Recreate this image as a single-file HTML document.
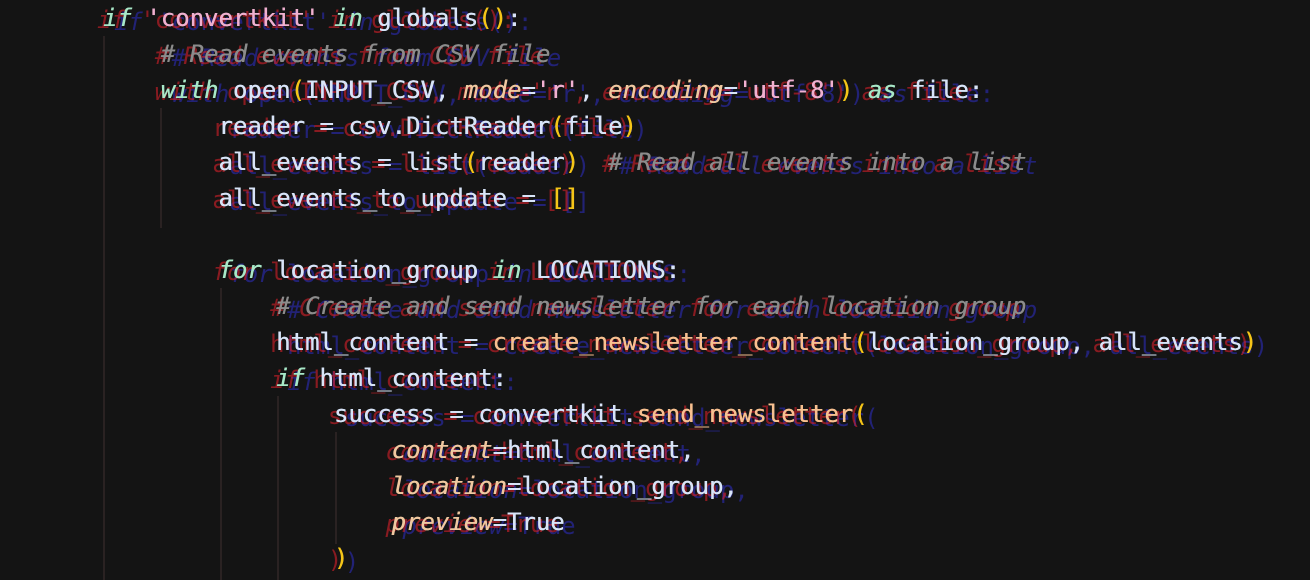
<!DOCTYPE html>
<html><head><style>
html,body{margin:0;padding:0;background:#141414;width:1310px;height:580px;overflow:hidden}
.l{position:absolute;left:0;top:0;width:1310px;height:580px}
pre{margin:0;font-family:"DejaVu Sans Mono","Liberation Mono",monospace;font-size:23.8px;line-height:36px;position:absolute;left:103px;top:0;color:#d8e4f8;white-space:pre;letter-spacing:0.1px}
.m pre{text-shadow:0.4px 0 0 currentColor}
.k{color:#a8e8c8;font-style:italic}
.s{color:#f0b0d0}
.c{color:#8c8c8c;font-style:italic}
.p{color:#f5c518}
.f{color:#f8c090}
.a{color:#f0c8a0;font-style:italic}
.r pre{left:97px;top:2px;opacity:.6}
.r pre,.r pre span{color:#d8202a!important}
.b pre{left:114px;top:4px;opacity:.5}
.b pre,.b pre span{color:#3030d8!important}
.g{position:absolute;width:2px;background:#2a2222}
</style></head><body>
<div class="g" style="left:103px;top:36px;height:544px"></div>
<div class="g" style="left:160px;top:108px;height:120px"></div>
<div class="g" style="left:220px;top:288px;height:292px"></div>
<div class="g" style="left:277px;top:396px;height:184px"></div>
<div class="g" style="left:335px;top:432px;height:112px"></div>
<div class="l b"><pre><span class="k">if</span> <span class="s">'convertkit'</span> <span class="k">in</span> globals<span class="p">()</span>:
    <span class="c"># Read events from CSV file</span>
    <span class="k">with</span> open<span class="p">(</span>INPUT_CSV, <span class="a">mode</span>=<span class="s">'r'</span>, <span class="a">encoding</span>=<span class="s">'utf-8'</span><span class="p">)</span> <span class="k">as</span> file:
        reader = csv.DictReader<span class="p">(</span>file<span class="p">)</span>
        all_events = list<span class="p">(</span>reader<span class="p">)</span>  <span class="c"># Read all events into a list</span>
        all_events_to_update = <span class="p">[]</span>

        <span class="k">for</span> location_group <span class="k">in</span> LOCATIONS:
            <span class="c"># Create and send newsletter for each location group</span>
            html_content = <span class="f">create_newsletter_content</span><span class="p">(</span>location_group, all_events<span class="p">)</span>
            <span class="k">if</span> html_content:
                success = convertkit.<span class="f">send_newsletter</span><span class="p">(</span>
                    <span class="a">content</span>=html_content,
                    <span class="a">location</span>=location_group,
                    <span class="a">preview</span>=True
                <span class="p">)</span></pre></div>
<div class="l r"><pre><span class="k">if</span> <span class="s">'convertkit'</span> <span class="k">in</span> globals<span class="p">()</span>:
    <span class="c"># Read events from CSV file</span>
    <span class="k">with</span> open<span class="p">(</span>INPUT_CSV, <span class="a">mode</span>=<span class="s">'r'</span>, <span class="a">encoding</span>=<span class="s">'utf-8'</span><span class="p">)</span> <span class="k">as</span> file:
        reader = csv.DictReader<span class="p">(</span>file<span class="p">)</span>
        all_events = list<span class="p">(</span>reader<span class="p">)</span>  <span class="c"># Read all events into a list</span>
        all_events_to_update = <span class="p">[]</span>

        <span class="k">for</span> location_group <span class="k">in</span> LOCATIONS:
            <span class="c"># Create and send newsletter for each location group</span>
            html_content = <span class="f">create_newsletter_content</span><span class="p">(</span>location_group, all_events<span class="p">)</span>
            <span class="k">if</span> html_content:
                success = convertkit.<span class="f">send_newsletter</span><span class="p">(</span>
                    <span class="a">content</span>=html_content,
                    <span class="a">location</span>=location_group,
                    <span class="a">preview</span>=True
                <span class="p">)</span></pre></div>
<div class="l m"><pre><span class="k">if</span> <span class="s">'convertkit'</span> <span class="k">in</span> globals<span class="p">()</span>:
    <span class="c"># Read events from CSV file</span>
    <span class="k">with</span> open<span class="p">(</span>INPUT_CSV, <span class="a">mode</span>=<span class="s">'r'</span>, <span class="a">encoding</span>=<span class="s">'utf-8'</span><span class="p">)</span> <span class="k">as</span> file:
        reader = csv.DictReader<span class="p">(</span>file<span class="p">)</span>
        all_events = list<span class="p">(</span>reader<span class="p">)</span>  <span class="c"># Read all events into a list</span>
        all_events_to_update = <span class="p">[]</span>

        <span class="k">for</span> location_group <span class="k">in</span> LOCATIONS:
            <span class="c"># Create and send newsletter for each location group</span>
            html_content = <span class="f">create_newsletter_content</span><span class="p">(</span>location_group, all_events<span class="p">)</span>
            <span class="k">if</span> html_content:
                success = convertkit.<span class="f">send_newsletter</span><span class="p">(</span>
                    <span class="a">content</span>=html_content,
                    <span class="a">location</span>=location_group,
                    <span class="a">preview</span>=True
                <span class="p">)</span></pre></div>
</body></html>
